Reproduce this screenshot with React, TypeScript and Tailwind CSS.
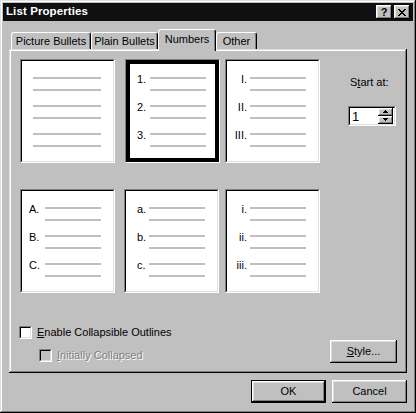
import React from 'react';

// classic 3D borders
const raised =
  'shadow-[inset_-1px_-1px_#000,inset_1px_1px_#fff,inset_-2px_-2px_#808080,inset_2px_2px_#dfdfdf]';
const windowEdge =
  'shadow-[inset_-1px_-1px_#000,inset_1px_1px_#dfdfdf,inset_-2px_-2px_#808080,inset_2px_2px_#fff]';

type BoxProps = {
  labels?: string[];
  selected?: boolean;
  labelCls?: string;
  className?: string;
};

const ListBox: React.FC<BoxProps> = ({ labels, selected, labelCls = '', className = '' }) => {
  const numbered = !!labels;
  return (
    <div
      className={`w-[95px] h-[104px] border border-t-[#808080] border-l-[#808080] border-b-white border-r-white ${className}`}
    >
      <div
        className={`h-full bg-white border ${
          selected
            ? 'border-black shadow-[inset_0_0_0_3px_#000]'
            : 'border-t-black border-l-black border-b-[#dfdfdf] border-r-[#dfdfdf]'
        }`}
      >
        <div className="pt-[10px] flex flex-col gap-[8px]">
          {[0, 1, 2].map((i) => (
            <div key={i}>
              <div className="flex items-center h-[14px]">
                <div className={`shrink-0 leading-[14px] pt-[2px] ${numbered ? 'w-[23px]' : 'w-[11px]'} ${labelCls}`}>
                  {labels?.[i]}
                </div>
                <div className={`h-[2px] bg-[#c0c0c0] ${numbered ? 'w-[56px]' : 'w-[68px]'}`} />
              </div>
              <div
                className={`mt-[4px] h-[2px] bg-[#c0c0c0] ${numbered ? 'ml-[23px] w-[56px]' : 'ml-[11px] w-[68px]'}`}
              />
            </div>
          ))}
        </div>
      </div>
    </div>
  );
};

const Check: React.FC<{ disabled?: boolean }> = ({ disabled }) => (
  <div className="w-[13px] h-[13px] border border-t-[#808080] border-l-[#808080] border-b-white border-r-white shrink-0">
    <div
      className={`h-full border border-t-black border-l-black border-b-[#dfdfdf] border-r-[#dfdfdf] ${
        disabled ? 'bg-[#c0c0c0]' : 'bg-white'
      }`}
    />
  </div>
);

const Tab: React.FC<{ label: string; w: string; active?: boolean }> = ({ label, w, active }) => (
  <div
    className={`${w} flex items-center justify-center rounded-t-[3px] border-t border-l border-t-white border-l-white border-r border-r-black shadow-[inset_-1px_0_#808080] bg-[#c0c0c0] ${
      active ? 'h-[22px] -mb-[2px] pb-[3px] relative z-10' : 'h-[17px]'
    }`}
  >
    {label}
  </div>
);

const App: React.FC = () => {
  return (
    <div
      className={`w-[416px] h-[413px] bg-[#c0c0c0] p-[3px] flex flex-col text-black text-[11px] font-['Liberation_Sans',Arial,sans-serif] ${windowEdge}`}
    >
      {/* Title bar */}
      <div className="h-[18px] bg-[#101010] flex items-center pl-[3px] pr-[3px] shrink-0">
        <span className="text-white font-bold text-[11.5px] tracking-[0.1px]">List Properties</span>
        <div className="ml-auto flex gap-[2px]">
          <div className={`w-[16px] h-[14px] bg-[#c0c0c0] flex items-center justify-center font-bold text-[11px] leading-none ${raised}`}>
            ?
          </div>
          <div className={`w-[16px] h-[14px] bg-[#c0c0c0] flex items-center justify-center ${raised}`}>
            <svg width="8" height="7" viewBox="0 0 8 7">
              <path d="M0 0h2v1h-2zM6 0h2v1h-2zM1 1h2v1h-2zM5 1h2v1h-2zM2 2h4v1h-4zM3 3h2v1h-2zM2 4h4v1h-4zM1 5h2v1h-2zM5 5h2v1h-2zM0 6h2v1h-2zM6 6h2v1h-2z" fill="#000" />
            </svg>
          </div>
        </div>
      </div>

      <div className="px-[6px]">
        {/* Tabs */}
        <div className="mt-[8px] h-[20px] flex items-end pl-[2px]">
          <Tab label="Picture Bullets" w="w-[80px]" />
          <Tab label="Plain Bullets" w="w-[67px]" />
          <Tab label="Numbers" w="w-[58px]" active />
          <Tab label="Other" w="w-[41px]" />
        </div>

        {/* Panel */}
        <div className={`h-[324px] ${windowEdge}`}>
          <div className="flex pt-[10px] pl-[11px]">
            <div className="flex flex-col gap-[26px]">
              <div className="flex">
                <ListBox />
                <ListBox className="ml-[10px]" selected labels={['1.', '2.', '3.']} labelCls="pl-[10px]" />
                <ListBox className="ml-[5px]" labels={['I.', 'II.', 'III.']} labelCls="text-right pr-[3px]" />
              </div>
              <div className="flex">
                <ListBox labels={['A.', 'B.', 'C.']} labelCls="pl-[7px]" />
                <ListBox className="ml-[9px]" labels={['a.', 'b.', 'c.']} labelCls="pl-[11px]" />
                <ListBox className="ml-[6px]" labels={['i.', 'ii.', 'iii.']} labelCls="text-right pr-[3px]" />
              </div>
            </div>

            <div className="ml-[28px] pt-[16px] flex flex-col">
              <div className="pl-[2px] h-[14px] leading-[14px]">
                S<u>t</u>art at:
              </div>
              <div className="mt-[17px] w-[48px] h-[20px] border border-t-[#808080] border-l-[#808080] border-b-white border-r-white">
                <div className="h-full flex bg-white border border-t-black border-l-black border-b-[#dfdfdf] border-r-[#dfdfdf]">
                  <div className="flex-1 pl-[2px] text-[13px] leading-[17px]">1</div>
                  <div className="w-[16px] flex flex-col py-[0px] pr-[1px]">
                    <div className={`h-[8px] bg-[#c0c0c0] flex items-center justify-center ${raised}`}>
                      <svg width="5" height="3" viewBox="0 0 5 3">
                        <path d="M2 0h1v1h1v1h1v1h-5v-1h1v-1h1z" fill="#000" />
                      </svg>
                    </div>
                    <div className={`h-[9px] bg-[#c0c0c0] flex items-center justify-center ${raised}`}>
                      <svg width="5" height="3" viewBox="0 0 5 3">
                        <path d="M0 0h5v1h-1v1h-1v1h-1v-1h-1v-1h-1z" fill="#000" />
                      </svg>
                    </div>
                  </div>
                </div>
              </div>
            </div>
          </div>

          {/* Bottom options */}
          <div className="mt-[33px] flex items-start justify-between pl-[10px] pr-[10px]">
            <div className="flex flex-col">
              <div className="flex items-center h-[13px] gap-[5px]">
                <Check />
                <span>
                  <u>E</u>nable Collapsible Outlines
                </span>
              </div>
              <div className="mt-[10px] ml-[20px] flex items-center h-[13px] gap-[5px]">
                <Check disabled />
                <span className="text-[#808080] [text-shadow:1px_1px_0_#fff]">
                  <u>I</u>nitially Collapsed
                </span>
              </div>
            </div>
            <div className={`mt-[14px] w-[67px] h-[23px] flex items-center justify-center ${raised}`}>
              <span>
                <u>S</u>tyle...
              </span>
            </div>
          </div>
        </div>

        {/* Dialog buttons */}
        <div className="mt-[7px] flex justify-end gap-[6px]">
          <div className="w-[75px] h-[23px] border border-black">
            <div className={`h-full flex items-center justify-center ${raised}`}>OK</div>
          </div>
          <div className={`w-[75px] h-[23px] flex items-center justify-center ${raised}`}>Cancel</div>
        </div>
      </div>
    </div>
  );
};

export default App;
